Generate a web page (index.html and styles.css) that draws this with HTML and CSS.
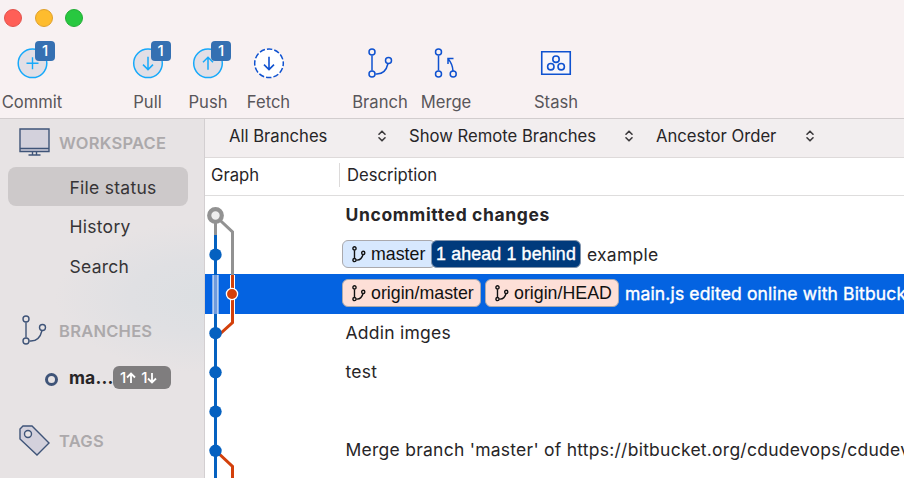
FILE: index.html
```
<!DOCTYPE html>
<html lang="en">
<head>
<meta charset="utf-8">
<title>Repository</title>
<link rel="stylesheet" href="styles.css">
</head>
<body>
<svg width="0" height="0" class="defs">
  <symbol id="branch" viewBox="0 0 26 32"><g fill="none" stroke="currentColor"><path d="M4.500 8v15M8 26.500c7 .6 11-4 12.500-10.500"/><circle cx="4.500" cy="4.500" r="3"/><circle cx="4.500" cy="26.500" r="3"/><circle cx="21" cy="13" r="3"/></g></symbol>
  <symbol id="updown" viewBox="0 0 8 12"><path d="M1 4.200 4 1.200l3 3M1 7.800l3 3 3-3" fill="none" stroke="#3c3a3c" stroke-width="1.600" stroke-linecap="round" stroke-linejoin="round"/></symbol>
</svg>
<div class="window">
  <header class="titlebar">
    <div class="lights"><i class="red"></i><i class="yellow"></i><i class="green"></i></div>
    <nav class="tools">
      <div class="tool commit"><span class="icon"><svg width="33" height="32" viewBox="-.5 -.3 33 32"><circle cx="16" cy="16" r="14.300" fill="#e2dfe6" stroke="#17a9fa" stroke-width="1.500"/><path d="M16 10v12M10 16h12" stroke="#17a9fa" stroke-width="1.400"/></svg><b class="count">1</b></span><span class="l">Commit</span></div>
      <div class="tool pull"><span class="icon"><svg width="32" height="32" viewBox="0 -.3 32 32"><circle cx="16" cy="16" r="14.300" fill="#e2dfe6" stroke="#17a9fa" stroke-width="1.500"/><path d="M16 9.500v12.500M11 17.300l5 5 5-5" fill="none" stroke="#17a9fa" stroke-width="1.500"/></svg><b class="count">1</b></span><span class="l">Pull</span></div>
      <div class="tool push"><span class="icon"><svg width="32" height="32" viewBox="0 -.3 32 32"><circle cx="16" cy="16" r="14.300" fill="#e2dfe6" stroke="#17a9fa" stroke-width="1.500"/><path d="M16 22.500V10M11 15l5-5 5 5" fill="none" stroke="#17a9fa" stroke-width="1.500"/></svg><b class="count">1</b></span><span class="l">Push</span></div>
      <div class="tool fetch"><span class="icon"><svg width="32" height="32" viewBox="0 -.3 32 32"><circle cx="16" cy="16" r="14.300" fill="#fff" stroke="#0f52d0" stroke-width="1.500" stroke-dasharray="5.500 2" stroke-dashoffset="2.700"/><path d="M16 9.500v12.500M11 17.300l5 5 5-5" fill="none" stroke="#0f52d0" stroke-width="1.600"/></svg></span><span class="l">Fetch</span></div>
      <div class="tool branch"><span class="icon"><svg class="blue" width="26" height="32" viewBox="-.5 -.5 26 32" stroke-width="1.500"><use href="#branch" width="26" height="32"/></svg></span><span class="l">Branch</span></div>
      <div class="tool merge"><span class="icon"><svg class="blue" width="26" height="32" viewBox="-.5 -.5 26 32" fill="none" stroke="currentColor" stroke-width="1.500"><path d="M5 8v15M19.500 23.500c-.3-5-2-9-5-12.300M14.500 16.500V11H20"/><circle cx="5" cy="4.500" r="3"/><circle cx="5" cy="26.500" r="3"/><circle cx="19.700" cy="26.500" r="3"/></svg></span><span class="l">Merge</span></div>
      <div class="tool stash"><span class="icon"><svg width="32" height="32" viewBox="0 -.2 32 32" fill="none" stroke="#0f52d0" stroke-width="1.600"><path d="M1.750 4.500h28.500v22.500H1.750z" fill="#f8f6fa"/><circle cx="16" cy="12" r="3.200"/><circle cx="10.800" cy="19.500" r="3.200"/><circle cx="21.200" cy="19.500" r="3.200"/></svg></span><span class="l">Stash</span></div>
    </nav>
  </header>
  <div class="body">
    <aside class="sidebar">
      <h2><svg width="32" height="30" fill="none" stroke="#3f5478" stroke-width="1.400"><path d="M1 1h29v22.500H1z" fill="#d3d1dc"/><path d="M1 20.500h29M13.500 24v2.500M17.500 24v2.500M9.500 27h12"/></svg><span>WORKSPACE</span></h2>
      <ul>
        <li class="active"><span>File status</span></li>
        <li><span>History</span></li>
        <li><span>Search</span></li>
      </ul>
      <h2 class="branches"><svg class="navy" width="32" height="32" viewBox="-2.500 .5 32 32" stroke-width="1.400"><use href="#branch" width="26" height="32"/></svg><span>BRANCHES</span></h2>
      <div class="current"><i></i><b>ma...</b><span class="ab">1<svg width="10" height="12"><path d="M5 11V1.500M1 5.500l4-4 4 4"/></svg><em>1</em><svg width="10" height="12"><path d="M5 1v9.500M1 6.500l4 4 4-4"/></svg></span></div>
      <h2 class="tags"><svg width="32" height="32" fill="none" stroke="#3f5478" stroke-width="1.400"><path d="M4 1h9l17 17-12 12L1 14V4z" fill="#d3d1dc"/><circle cx="9" cy="9" r="3.500" fill="#e7e3e4"/></svg><span>TAGS</span></h2>
    </aside>
    <main>
      <div class="filters">
        <div class="f1"><span>All Branches</span><svg width="8" height="12"><use href="#updown"/></svg></div>
        <div class="f2"><span>Show Remote Branches</span><svg width="8" height="12"><use href="#updown"/></svg></div>
        <div class="f3"><span>Ancestor Order</span><svg width="8" height="12"><use href="#updown"/></svg></div>
      </div>
      <div class="heads"><span class="g">Graph</span><span class="d">Description</span></div>
      <div class="log">
        <div class="row"><b class="pending">Uncommitted changes</b></div>
        <div class="row tagged"><span class="ref local"><svg width="14" height="17" stroke-width="2.600"><use href="#branch"/></svg><span>master</span></span><span class="ahead">1 ahead 1 behind</span><span class="msg">example</span></div>
        <div class="row tagged sel"><span class="ref remote r1"><svg width="14" height="17" stroke-width="2.600"><use href="#branch"/></svg><span>origin/master</span></span><span class="ref remote r2"><svg width="14" height="17" stroke-width="2.600"><use href="#branch"/></svg><span>origin/HEAD</span></span><span class="msg picked">main.js edited online with Bitbucket</span></div>
        <div class="row"><span>Addin imges</span></div>
        <div class="row"><span>test</span></div>
        <div class="row"></div>
        <div class="row"><span>Merge branch 'master' of https://bitbucket.org/cdudevops/cdudevops</span></div>
        <svg class="graph" width="60" height="282" fill="none">
          <path d="M10.500 19v20" stroke="#929292" stroke-width="3"/>
          <path d="M10.500 39v243" stroke="#0561c0" stroke-width="3"/>
          <path d="M10.500 79v39" stroke="#fff" stroke-width="6"/>
          <path d="M10.500 79v39" stroke="#6f9bdd" stroke-width="4"/>
          <path d="M10.500 20 27.500 36v43" stroke="#929292" stroke-width="3"/>
          <path d="M27.500 79v39" stroke="#fff" stroke-width="5"/>
          <path d="M27.500 79v47.500L10.500 142" stroke="#d3400b" stroke-width="3"/>
          <path d="M10.500 254.500 27.500 270.500V282" stroke="#d3400b" stroke-width="3"/>
          <circle cx="10.500" cy="19.500" r="6.300" fill="#eee" stroke="#929292" stroke-width="4.200"/>
          <g fill="#0561c0"><circle cx="10.500" cy="58.700" r="6.200"/><circle cx="10.500" cy="137.200" r="6.200"/><circle cx="10.500" cy="176.300" r="6.200"/><circle cx="10.500" cy="215.600" r="6.200"/><circle cx="10.500" cy="254.800" r="6.200"/></g>
          <circle cx="27" cy="98" r="5.600" fill="#d3400b" stroke="#fff" stroke-width="1.300"/>
        </svg>
      </div>
    </main>
  </div>
</div>
</body>
</html>
```
FILE: styles.css
```
* { box-sizing: border-box; }
body { margin: 0; overflow: hidden; font-family: Inter, "Liberation Sans", sans-serif; font-size: 17.500px; color: #272527; }
svg { display: block; flex: none; }
.defs { position: absolute; }
.window { width: 904px; height: 478px; display: flex; flex-direction: column; overflow: hidden; }
span, b { white-space: nowrap; }

.titlebar { height: 119px; background: #f8f1f2; border-bottom: 1px solid #d2cdce; flex: none; }
.lights { display: flex; gap: 12.300px; padding: 9px 0 0 4.400px; height: 47px; }
.lights i { width: 18px; height: 18px; border-radius: 50%; border: 1px solid #e2524c; }
.red { background: #ff5f57; }
.lights .yellow { background: #febc2e; border-color: #dfa02c; }
.lights .green { background: #28c840; border-color: #23ac36; }
.tools { display: flex; }
.tool { width: 60px; display: flex; flex-direction: column; align-items: center; color: #59565a; font-size: 16.600px; line-height: 20px; }
.tool .l { margin-top: 13px; }
.icon { position: relative; height: 32px; display: block; }
.count { position: absolute; left: 19px; top: -6px; width: 20px; height: 20px; border-radius: 4px; background: #3570b2; color: #fff; font-size: 15px; line-height: 20px; font-weight: 500; text-align: center; }
.commit { width: 64px; margin-right: 53.500px; }
.commit .count { left: 19.500px; }
.push { margin-left: .5px; }
.fetch { margin-right: 48.500px; margin-left: .5px; }
.branch, .merge { width: 66px; }
.stash { margin-left: 47px; }
.blue { color: #0f52d0; }
.navy { color: #3f5478; }

.body { display: flex; flex: 1; min-height: 0; }
.sidebar { width: 205px; flex: none; border-right: 1px solid #d3cfd1; background: radial-gradient(ellipse 150px 75px at 205px 178px, #dcdfe2, #e0e0e3 50%, #e7e3e4 100%); }
h2 { margin: 0; padding-left: 19px; display: flex; align-items: center; gap: 8px; height: 32px; font-size: 16.500px; font-weight: 600; letter-spacing: .25px; color: #aca9ab; }
.sidebar > h2:first-child { margin-top: 8px; }
ul { list-style: none; margin: 8px 0 0; padding: 0 16px 0 8px; }
li { height: 39.300px; padding-left: 61.500px; line-height: 42.500px; font-size: 17.500px; letter-spacing: .27px; color: #363436; border-radius: 8px; }
.active { background: #cdc9ca; }
.branches { margin-top: 30px; }
.current { display: flex; align-items: center; height: 24px; margin-top: 19px; padding-left: 45px; }
.current i { width: 13px; height: 13px; border: 3.500px solid #3f5478; border-radius: 50%; margin: 3px 11px 0 0; }
.current b { width: 44px; font-weight: 700; letter-spacing: .15px; }
.ab { width: 58px; height: 23px; border-radius: 6px; background: #7f7d7e; color: #fff; display: flex; align-items: center; padding-left: 7px; font-size: 15px; font-weight: 500; }
.ab em { font-style: normal; margin-left: 5px; }
.ab path { fill: none; stroke: #fff; stroke-width: 1.800; }
.tags { margin-top: 35px; }

main { flex: 1; min-width: 0; background: #fff; }
.filters { display: flex; height: 39px; background: #f2eeef; border-bottom: 1px solid #dedada; padding-left: 24px; font-size: 16.650px; }
.filters div { display: flex; align-items: center; justify-content: space-between; height: 34px; }
.f1 { width: 156.500px; margin-right: 23.500px; }
.f2 { width: 224px; margin-right: 23px; }
.f3 { width: 158px; }
.heads { display: flex; align-items: center; height: 38px; border-bottom: 1px solid #dedddd; font-size: 16.650px; }
.heads span { height: 24px; line-height: 25px; margin-top: -3px; }
.g { width: 135px; padding-left: 6px; border-right: 1px solid #dcdada; }
.d { padding-left: 7px; }
.log { position: relative; letter-spacing: .25px; }
.graph { position: absolute; left: 0; top: 0; }
.row { height: 39.200px; display: flex; align-items: center; padding-left: 140.500px; padding-bottom: 2.200px; }
.pending { letter-spacing: .63px; }
.tagged { padding-left: 137px; padding-bottom: 1.500px; }
.sel { background: #0463e1; color: #fff; }
.ref { flex: none; display: flex; align-items: center; height: 28px; border: 1.500px solid #aaa9ad; border-radius: 6px; padding-left: 9px; gap: 5px; font: 17.800px "Liberation Sans", Arial, sans-serif; letter-spacing: 0; color: #111; }
.local { background: #d7e8fe; width: 94px; }
.remote { background: #fddfd7; }
.r1 { width: 139px; margin-right: 4px; }
.r2 { width: 134px; }
.ahead { flex: none; height: 28px; width: 150px; margin-left: -5px; border: 1px solid #8294ac; border-radius: 6px; background: #003a7c; color: #fff; text-align: center; line-height: 26px; font-family: "Liberation Sans", Arial, sans-serif; font-size: 17.800px; letter-spacing: .15px; -webkit-text-stroke: .4px #fff; }
.ref > span { padding-top: 1px; }
.msg { margin-left: 6px; }
.picked { letter-spacing: .15px; -webkit-text-stroke: .4px #fff; }
```
